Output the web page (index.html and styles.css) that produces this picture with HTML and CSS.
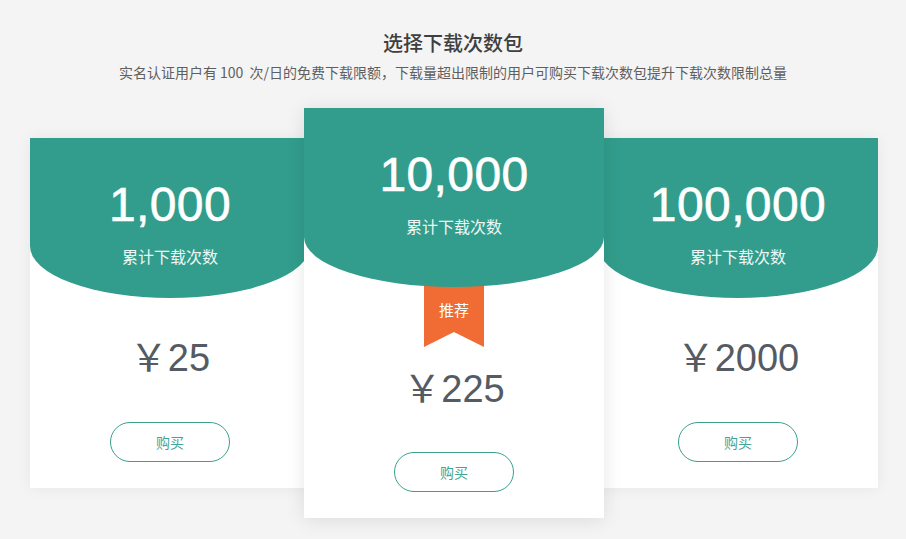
FILE: index.html
```html
<!DOCTYPE html>
<html lang="zh-CN">
<head>
<meta charset="utf-8">
<title>选择下载次数包</title>
<link rel="stylesheet" href="styles.css">
</head>
<body>
<div class="page">
  <header class="intro">
    <h1 class="title">选择下载次数包</h1>
    <p class="subtitle">实名认证用户有 100&nbsp; 次/日的免费下载限额，下载量超出限制的用户可购买下载次数包提升下载次数限制总量</p>
  </header>
  <div class="plans">
    <div class="card">
      <div class="card-head">
        <div class="count">1,000</div>
        <div class="count-label">累计下载次数</div>
      </div>
      <div class="price">￥25</div>
      <button class="buy">购买</button>
    </div>
    <div class="card card-featured">
      <div class="card-head">
        <div class="count">10,000</div>
        <div class="count-label">累计下载次数</div>
      </div>
      <div class="ribbon">推荐</div>
      <div class="price">￥225</div>
      <button class="buy">购买</button>
    </div>
    <div class="card">
      <div class="card-head">
        <div class="count">100,000</div>
        <div class="count-label">累计下载次数</div>
      </div>
      <div class="price">￥2000</div>
      <button class="buy">购买</button>
    </div>
  </div>
</div>
</body>
</html>
```

FILE: styles.css
```css
html, body {
  margin: 0;
  padding: 0;
  background: #f4f4f4;
}
body {
  font-family: "Liberation Sans", "Noto Sans CJK SC", sans-serif;
  width: 906px;
  height: 539px;
  overflow: hidden;
}
.page {
  display: flex;
  flex-direction: column;
  align-items: center;
}
.intro {
  text-align: center;
  padding-top: 30px;
}
.title {
  margin: 0;
  font-family: "Noto Sans CJK SC", sans-serif;
  font-size: 20px;
  line-height: 26px;
  font-weight: 500;
  color: #3f3f3f;
}
.subtitle {
  margin: 6px 0 0;
  font-family: "Noto Sans CJK SC", sans-serif;
  font-size: 14px;
  line-height: 20px;
  color: #5f5f5f;
}
.plans {
  margin-top: 26px;
  margin-left: 2px;
  display: flex;
  align-items: center;
}
.card {
  width: 280px;
  height: 350px;
  background: #fff;
  box-shadow: 0 0 14px rgba(0, 0, 0, 0.06);
  display: flex;
  flex-direction: column;
  align-items: center;
  position: relative;
}
.card-featured {
  width: 300px;
  height: 410px;
  margin: 0 -6px;
  z-index: 2;
  box-shadow: 0 2px 18px rgba(0, 0, 0, 0.1);
}
.card-head {
  align-self: stretch;
  height: 160px;
  background: #329d8c;
  color: #fff;
  text-align: center;
  border-radius: 0 0 50% 50% / 0 0 52px 52px;
  position: relative;
  z-index: 1;
  box-sizing: border-box;
  padding-top: 39px;
}
.card-featured .card-head {
  height: 179px;
  border-radius: 0 0 50% 50% / 0 0 50px 50px;
}
.count {
  font-size: 48px;
  line-height: 56px;
  font-weight: 400;
  letter-spacing: 0.4px;
  -webkit-text-stroke: 0.6px #fff;
}
.count-label {
  margin-top: 13px;
  font-family: "Noto Sans CJK SC", sans-serif;
  font-size: 16px;
  line-height: 20px;
  color: #eef7f5;
}
.ribbon {
  width: 60px;
  height: 70px;
  margin-top: -10px;
  box-sizing: border-box;
  background: #f06c34;
  color: #fff;
  font-family: "Noto Sans CJK SC", sans-serif;
  font-size: 15px;
  line-height: 24px;
  text-align: center;
  padding-top: 21px;
  clip-path: polygon(0 0, 100% 0, 100% 100%, 50% 78.5%, 0 100%);
}
.price {
  margin-top: 38px;
  font-size: 38px;
  line-height: 44px;
  color: #545b62;
}
.card-featured .price {
  margin-top: 20px;
}
.buy {
  margin-top: 42px;
  width: 120px;
  height: 40px;
  border: 1px solid #3a9f8d;
  border-radius: 20px;
  background: #fff;
  color: #45a594;
  font-family: "Noto Sans CJK SC", sans-serif;
  font-size: 14px;
  padding: 0;
}
.card-featured .buy {
  margin-top: 41px;
}
```
